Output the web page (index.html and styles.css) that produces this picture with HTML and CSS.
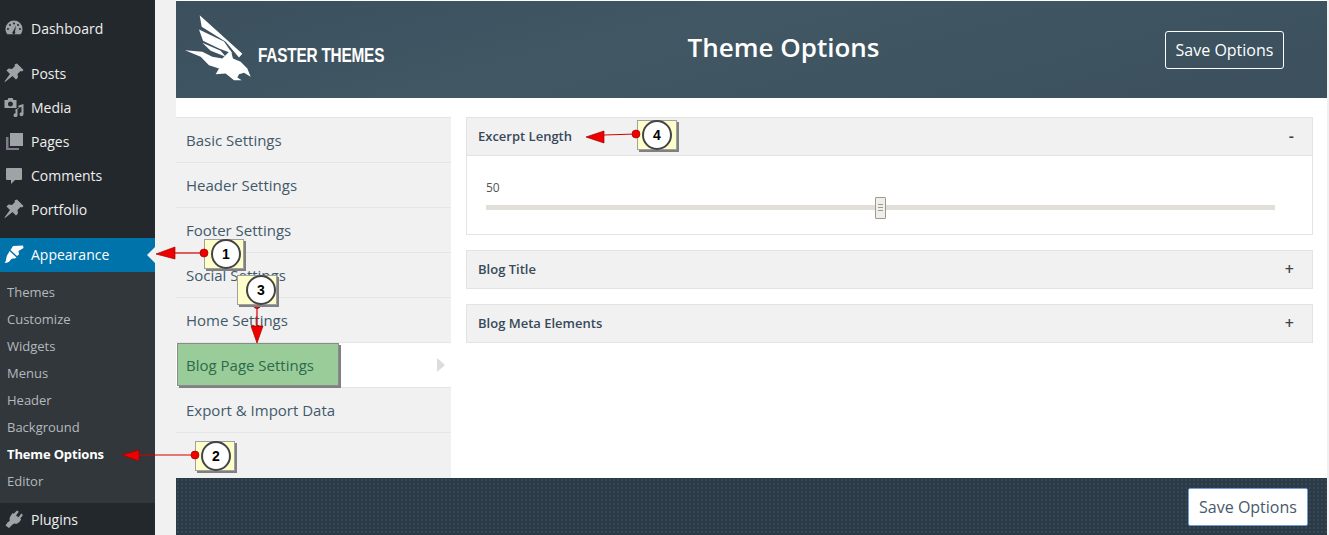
FILE: index.html
```html
<!DOCTYPE html>
<html lang="en">
<head>
<meta charset="utf-8">
<title>Theme Options</title>
<link rel="stylesheet" href="styles.css">
</head>
<body>
<div class="page">
  <aside class="sidebar">
    <ul class="menu first">
      <li class="item"><svg class="ico" viewBox="0 0 20 20"><path d="M10 2.500a8.500 8.500 0 0 0-8.500 8.500c0 2 .7 3.800 1.800 5.200h13.400a8.500 8.500 0 0 0 1.800-5.200A8.500 8.500 0 0 0 10 2.500zM10 4.500a1 1 0 1 1 0 2 1 1 0 0 1 0-2zM6 6a1 1 0 1 1 0 2 1 1 0 0 1 0-2zM14 6a1 1 0 1 1 0 2 1 1 0 0 1 0-2zM4 10a1 1 0 1 1 0 2 1 1 0 0 1 0-2zM16 10a1 1 0 1 1 0 2 1 1 0 0 1 0-2zM12 7.500l-1 6.200a1.500 1.500 0 1 1-2-.3z"/></svg>Dashboard</li>
    </ul>
    <ul class="menu second">
      <li class="item"><svg class="ico" viewBox="0 0 20 20"><path d="M13 .500l6.500 6.500-1.500 1.500-1.500-.5-3 3 .5 3.500-2 2-3.500-3.500L1 19l-.5-.5 5.500-7.500-3.500-3.500 2-2 3.500.5 3-3-.5-1.500z"/></svg>Posts</li>
      <li class="item"><svg class="ico" viewBox="0 0 20 20"><path d="M.5 3h3l1-2h4l1 2h3v8H.5zM6.500 4.500a2.500 2.500 0 1 0 0 5 2.500 2.500 0 0 0 0-5zM19.500 7v10a2 2 0 1 1-2-1.800V10l-4 1v7a2 2 0 1 1-2-1.800V12h3V8.500z"/></svg>Media</li>
      <li class="item"><svg class="ico" viewBox="0 0 20 20"><path d="M6 2h13v13H6z"/><path class="dim" d="M2 6h2.500v11H15v2H2z"/></svg>Pages</li>
      <li class="item"><svg class="ico" viewBox="0 0 20 20"><path d="M3 3h14a1 1 0 0 1 1 1v10a1 1 0 0 1-1 1h-6l-4 4v-4H3a1 1 0 0 1-1-1V4a1 1 0 0 1 1-1z"/></svg>Comments</li>
      <li class="item"><svg class="ico" viewBox="0 0 20 20"><path d="M13 .500l6.500 6.500-1.500 1.500-1.500-.5-3 3 .5 3.500-2 2-3.500-3.500L1 19l-.5-.5 5.500-7.500-3.500-3.500 2-2 3.500.5 3-3-.5-1.500z"/></svg>Portfolio</li>
    </ul>
    <ul class="menu third">
      <li class="item current"><svg class="ico" viewBox="0 0 20 20"><path d="M9 2l10-.5.500 2.500-5 3 .5 3.500-2 1.500-6.500-6zM5.500 7l7 6.500c-1.500 1.500-3.500.5-5 1.500S5.500 19 .5 19c2-2 1.500-4 2-6s2-3.500 3-6z"/></svg>Appearance</li>
    </ul>
    <ul class="submenu">
      <li>Themes</li>
      <li>Customize</li>
      <li>Widgets</li>
      <li>Menus</li>
      <li>Header</li>
      <li>Background</li>
      <li class="on">Theme Options</li>
      <li>Editor</li>
    </ul>
    <ul class="menu">
      <li class="item"><svg class="ico" viewBox="0 0 20 20"><path d="M13 1.500l1.800 1.300L12 6.500l2.500 1.800 2.800-3.700 1.700 1.300-2.800 3.700 1 .8-1.500 2c-1.500 2-3.800 2.800-5.700 2L7.500 16.500 5 19l-3.500-2.500 2-3 2.300-1.700c-.6-2 0-4 1.400-5.800l1.500-2 1 .7z"/></svg>Plugins</li>
    </ul>
  </aside>

  <main class="content">
    <header class="banner">
      <div class="brand">
        <svg class="falcon" viewBox="28 45 198 200"><path d="M72 45L200 161 190 172 150 125 78 80z"/><path d="M70 88L145 124 170 160 130 145 82 122z"/><path d="M80 128L135 152 150 170 105 152z"/><path d="M28 150L80 155 110 170 140 175 165 150 172 175 195 185 215 205 225 230 205 218 190 222 185 232 198 240 175 240 150 220 120 222 130 205 100 195 75 170z"/></svg>
        <span class="brand-name">FASTER THEMES</span>
      </div>
      <h1 class="title">Theme Options</h1>
      <button class="save-top">Save Options</button>
    </header>

    <div class="body">
      <nav class="tabs">
        <a class="tab">Basic Settings</a>
        <a class="tab">Header Settings</a>
        <a class="tab">Footer Settings</a>
        <a class="tab">Social Settings</a>
        <a class="tab">Home Settings</a>
        <a class="tab active">Blog Page Settings</a>
        <a class="tab">Export &amp; Import Data</a>
      </nav>
      <section class="panels">
        <div class="panel">
          <div class="panel-head open"><span>Excerpt Length</span><b class="toggle">-</b></div>
          <div class="panel-body">
            <div class="value">50</div>
            <div class="track"><span class="handle"></span></div>
          </div>
        </div>
        <div class="panel">
          <div class="panel-head closed"><span>Blog Title</span><b class="toggle">+</b></div>
        </div>
        <div class="panel">
          <div class="panel-head closed"><span>Blog Meta Elements</span><b class="toggle">+</b></div>
        </div>
      </section>
    </div>

    <footer class="foot">
      <button class="save-bottom">Save Options</button>
    </footer>
  </main>
</div>

<div class="highlight">Blog Page Settings</div>
<div class="note n1"><span>1</span></div>
<div class="note n2"><span>2</span></div>
<div class="note n4"><span>4</span></div>
<svg class="arrows" viewBox="0 0 1329 535" width="1329" height="535">
  <g class="arrow">
    <path d="M204 253H175"/><polygon points="156,254 175,247 175,259"/><circle cx="204" cy="253" r="4"/>
    <path d="M195 455H139"/><polygon points="122,455 139,450 139,461"/><circle cx="195" cy="455" r="4"/>
    <path d="M257 304V326"/><polygon points="257,343 251,326 263,326"/><circle cx="257" cy="305" r="3.500"/>
    <path d="M636 134L604 135"/><polygon points="586,137 604,131 604,143"/><circle cx="636" cy="134" r="4"/>
  </g>
</svg>
<div class="note n3"><span>3</span></div>
</body>
</html>
```
FILE: styles.css
```css
* { box-sizing: border-box; }
html, body { margin: 0; padding: 0; height: 535px; overflow: hidden; background: #f1f1f1; }
body { font-family: "Open Sans", sans-serif; position: relative; }
ul { list-style: none; margin: 0; padding: 0; }
.page { display: flex; height: 535px; }

.sidebar { width: 155px; flex: none; background: #23282d; padding-top: 12px; }
.menu.second { margin-top: 11px; }
.menu.third { margin-top: 11px; }
.item { height: 34px; display: flex; align-items: center; color: #eee; font-size: 14px; position: relative; padding-bottom: 2px; }
.ico { width: 20px; height: 20px; margin: 0 7px 0 4px; fill: #9ea3a8; flex: none; }
.ico .dim { fill: #7f7a8c; }
.current { background: #0073aa; color: #fff; }
.current .ico { fill: #fff; }
.current::after { content: ""; position: absolute; right: 0; top: 9px; border: 8px solid transparent; border-right-color: #f1f1f1; border-left-width: 0; }
.submenu { background: #32373c; padding: 7px 0 8px; }
.submenu li { height: 27px; line-height: 26px; padding-left: 7px; font-size: 13px; color: #b4b9be; }
.submenu li.on { color: #fff; font-weight: 700; letter-spacing: -.15px; }

.content { margin-left: 21px; width: 1151px; flex: none; background: #fff; display: flex; flex-direction: column; }
.banner { margin-top: 1px; height: 97px; flex: none; position: relative; display: flex; align-items: center; justify-content: center; background-color: #3f5461; background-image: linear-gradient(165deg, #3b4f5d 0%, #415764 40%, #3f5461 65%, #3b4f5d 100%); }
.brand { position: absolute; left: 9px; top: 14px; display: flex; align-items: center; gap: 7px; }
.falcon { width: 66px; height: 67px; fill: #fff; flex: none; }
.brand-name { font-family: "Liberation Sans", sans-serif; color: #fff; font-weight: 700; font-size: 20px; letter-spacing: -.3px; margin-top: 14px; white-space: nowrap; transform: scaleX(.77); transform-origin: left center; }
.title { margin: 0 0 5px; color: #fff; font-size: 26px; font-weight: 600; transform: translateX(32px); }
.save-top { position: absolute; left: 989px; top: 30px; width: 119px; height: 38px; background: transparent; border: 1px solid #fff; border-radius: 3px; color: #fff; font: 16px "Open Sans", sans-serif; padding: 0; }

.body { flex: 1; display: flex; background: #fff; padding-top: 19px; }
.tabs { width: 275px; flex: none; background: #f1f1f1; display: flex; flex-direction: column; }
.tab { height: 45px; flex: none; padding-left: 10px; border-top: 1px solid #e5e5e5; color: #42596b; font-size: 15px; line-height: 45px; }
.tab:last-child { border-bottom: 1px solid #e5e5e5; height: 46px; }
.tab.active { background: #fff; position: relative; }
.tab.active::after { content: ""; position: absolute; right: 6px; top: 15px; border: 7px solid transparent; border-left: 8px solid #dcdcdc; border-right-width: 0; }
.panels { margin-left: 15px; width: 847px; display: flex; flex-direction: column; gap: 15px; }
.panel { border: 1px solid #e3e3e3; }
.panel-head { height: 37px; background: #f1f1f1; border-bottom: 1px solid #e3e3e3; display: flex; align-items: center; justify-content: space-between; padding: 0 18px 0 11px; color: #37495a; font-size: 13px; font-weight: 600; }
.panel-head.open { height: 38px; padding-bottom: 1px; }
.panel-head.closed { border-bottom: 0; padding-bottom: 2px; }
.toggle { font-size: 16px; font-weight: 600; color: #444; }
.panel-body { height: 78px; padding: 23px 37px 0 19px; position: relative; }
.value { font-size: 12px; color: #555; line-height: 17px; }
.track { height: 5px; background: #e2dfd8; margin-top: 9px; position: relative; }
.handle { position: absolute; left: 389px; top: -8px; width: 11px; height: 22px; background: #f1efea; border: 1px solid #9c9a90; border-radius: 1px; }
.handle::after { content: ""; position: absolute; left: 2px; top: 6px; width: 5px; height: 7px; background: repeating-linear-gradient(#9c9a90 0 1px, transparent 1px 3px); }

.foot { height: 57px; flex: none; background-color: #2a3a47; background-image: radial-gradient(#364653 1px, transparent 1px); background-size: 4px 4px; display: flex; align-items: center; justify-content: flex-end; padding-right: 19px; }
.save-bottom { width: 120px; height: 38px; background: #fff; border: 1px solid #6f9ddb; border-radius: 2px; color: #47596b; font: 16px "Open Sans", sans-serif; padding: 0; margin-top: 1px; }

.highlight { position: absolute; left: 177px; top: 343px; width: 162px; height: 43px; background: #99cc99; border: 1px solid #8a8a8a; box-shadow: 2px 2px 0 #808080; color: #2d6a4a; font-size: 15px; line-height: 42px; padding-left: 8px; }
.note { position: absolute; width: 40px; height: 30px; background: #ffffcc; border: 1px solid #a0a0a0; box-shadow: 2px 2px 0 #808080; }
.note span { position: absolute; top: -1px; width: 30px; height: 30px; border: 2px solid #444; border-radius: 50%; background: #fff; color: #000; font: 700 14px/26px "Liberation Sans", sans-serif; text-align: center; }
.n1 { left: 204px; top: 239px; }
.n1 span { left: 6px; }
.n2 { left: 195px; top: 441px; }
.n2 span { left: 5px; }
.n3 { left: 237px; top: 275px; }
.n3 span { left: 8px; }
.n4 { left: 637px; top: 120px; }
.n4 span { left: 4px; }
.arrows { position: absolute; left: 0; top: 0; pointer-events: none; }
.arrow path { stroke: #d40000; stroke-width: 1.200; fill: none; }
.arrow polygon, .arrow circle { fill: #ee0000; stroke: #a00000; stroke-width: .700; }
```
